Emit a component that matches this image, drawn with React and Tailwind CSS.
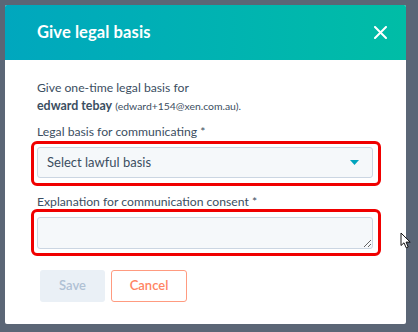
import { useState } from 'react'

const font = { fontFamily: 'Lato, "Open Sans", sans-serif' }

const CloseIcon = () => (
  <svg width="13" height="13" viewBox="0 0 13 13" fill="none">
    <path d="M1 1 L12 12 M12 1 L1 12" stroke="white" strokeWidth="2" strokeLinecap="round" />
  </svg>
)

const Cursor = () => (
  <svg width="12" height="17" viewBox="0 0 12 17" className="absolute left-[400px] top-[232px]">
    <path d="M1 1 L1 13.5 L4 10.8 L6.2 15.8 L8.2 15 L6.1 10.1 L10.2 10.1 Z" fill="white" stroke="#111" strokeWidth="1" strokeLinejoin="round" />
  </svg>
)

export default function App() {
  const [note, setNote] = useState('')

  return (
    <div
      className="relative w-[418px] h-[332px] bg-[#5b6676] pl-[5px] pt-[5px] pr-[12px] pb-[8px] overflow-hidden"
      style={font}
    >
      <div className="flex flex-col w-[401px] h-[319px] bg-white rounded-[2px] overflow-hidden">
        {/* header */}
        <div className="h-[55px] shrink-0 flex items-center justify-between pl-[32px] pr-[19px] bg-gradient-to-r from-[#00a7be] to-[#00bda6]">
          <h2 className="text-[16.5px] font-bold text-white tracking-[0.1px]">Give legal basis</h2>
          <CloseIcon />
        </div>

        {/* body */}
        <div className="flex flex-col px-[32px] pt-[19px] text-[#3b4e61]">
          <p className="text-[12.2px] leading-[18px]">
            Give one-time legal basis for
            <br />
            <span className="font-bold text-[12.4px]">edward tebay</span>{' '}
            <span className="text-[10.4px]">(edward+154@xen.com.au).</span>
          </p>

          <label className="mt-[9px] text-[12.2px] leading-[15px]">Legal basis for communicating *</label>
          <div className="mt-[2px] -ml-[6px] w-[350px] border-[3px] border-[#f00000] rounded-[6px] pl-[3px] pr-[5px] pt-[3px] pb-[5px]">
            <div className="w-[336px] h-[31px] flex items-center justify-between bg-[#f5f8fa] border border-[#cbd6e2] rounded-[3px] pl-[9px] pr-[13px]">
              <span className="text-[13px] text-[#3b4e61]">Select lawful basis</span>
              <svg width="9" height="5" viewBox="0 0 9 5">
                <path d="M0 0 L9 0 L4.5 5 Z" fill="#00a4bd" />
              </svg>
            </div>
          </div>

          <label className="mt-[8px] text-[12.2px] leading-[15px]">Explanation for communication consent *</label>
          <div className="-ml-[6px] w-[350px] border-[3px] border-[#f00000] rounded-[6px] pl-[3px] pr-[5px] pt-[5px] pb-[4px]">
            <textarea
              value={note}
              onChange={(e) => setNote(e.target.value)}
              className="block w-[336px] h-[32px] bg-[#f5f8fa] border border-[#cbd6e2] rounded-[3px] resize-y outline-none"
            />
          </div>

          <div className="mt-[14px] ml-[3px] flex gap-[6px]">
            <button
              disabled
              className="w-[65px] h-[32px] rounded-[3px] bg-[#eaf0f6] text-[#b0c1d4] text-[13px] font-semibold"
            >
              Save
            </button>
            <button className="w-[76px] h-[32px] rounded-[3px] border border-[#ff9b80] bg-white text-[#ff8463] text-[13px] font-semibold">
              Cancel
            </button>
          </div>
        </div>
      </div>
      <Cursor />
    </div>
  )
}
